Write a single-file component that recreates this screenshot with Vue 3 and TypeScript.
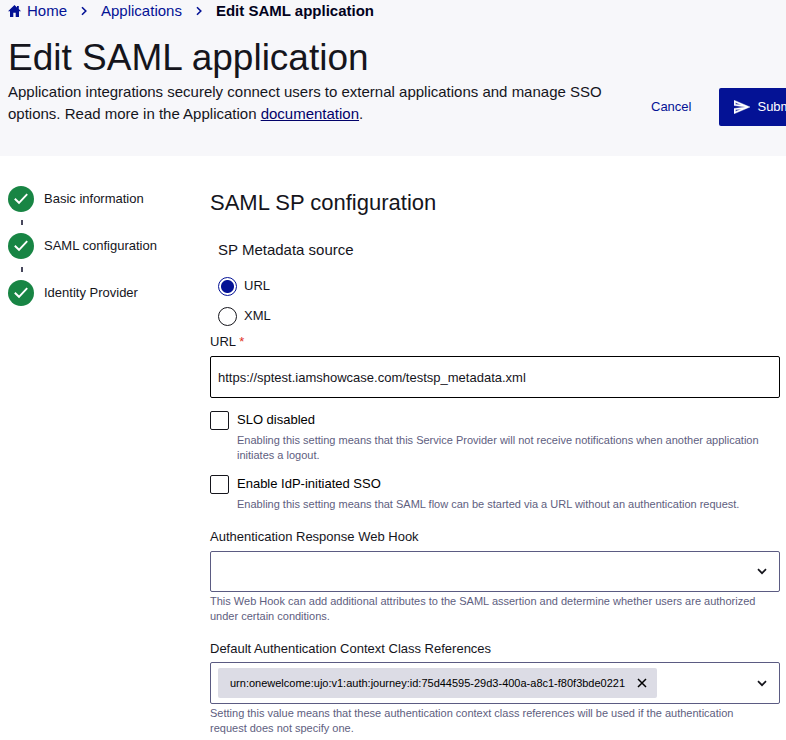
<script setup lang="ts">
import { ref } from 'vue'

interface Step {
  label: string
}

interface Option {
  key: string
  label: string
  hint: string
  enabled: boolean
}

const steps: Step[] = [
  { label: 'Basic information' },
  { label: 'SAML configuration' },
  { label: 'Identity Provider' },
]

const sources: string[] = ['URL', 'XML']
const source = ref('URL')
const metadataUrl = ref('https://sptest.iamshowcase.com/testsp_metadata.xml')
const webHook = ref('')

const options = ref<Option[]>([
  {
    key: 'slo',
    label: 'SLO disabled',
    hint: 'Enabling this setting means that this Service Provider will not receive notifications when another application initiates a logout.',
    enabled: false,
  },
  {
    key: 'idp',
    label: 'Enable IdP-initiated SSO',
    hint: 'Enabling this setting means that SAML flow can be started via a URL without an authentication request.',
    enabled: false,
  },
])

const references = ref<string[]>([
  'urn:onewelcome:ujo:v1:auth:journey:id:75d44595-29d3-400a-a8c1-f80f3bde0221',
])

function removeReference(value: string): void {
  references.value = references.value.filter((item) => item !== value)
}
</script>

<template>
  <div class="page">
    <header class="header">
      <nav class="crumbs" aria-label="Breadcrumb">
        <a href="#home" class="crumb home">
          <svg class="home-icon" viewBox="0 0 13 12" aria-hidden="true">
            <path d="M6.500 0 0 6.200h2V12h3.300V7.800h2.400V12H11V6.200h2L10.800 4.100V1H9v1.400Z" fill="currentColor" />
          </svg>
          Home
        </a>
        <svg class="crumb-sep" viewBox="0 0 6 10" aria-hidden="true">
          <path d="M1 1.200 4.800 5 1 8.800" fill="none" stroke="currentColor" stroke-width="1.600" />
        </svg>
        <a href="#applications" class="crumb">Applications</a>
        <svg class="crumb-sep" viewBox="0 0 6 10" aria-hidden="true">
          <path d="M1 1.200 4.800 5 1 8.800" fill="none" stroke="currentColor" stroke-width="1.600" />
        </svg>
        <span class="crumb current" aria-current="page">Edit SAML application</span>
      </nav>
      <h1>Edit SAML application</h1>
      <div class="intro-row">
        <p class="intro">
          Application integrations securely connect users to external applications and manage SSO
          options. Read more in the Application <a href="#documentation">documentation</a>.
        </p>
        <div class="actions">
          <button type="button" class="btn text">Cancel</button>
          <button type="submit" form="saml-form" class="btn primary">
            <svg class="send-icon" viewBox="2 3 21 18" aria-hidden="true">
              <path d="M4.010 6.030l7.510 3.220-7.520-1 .010-2.220m7.500 8.720L4 17.970v-2.220l7.510-1M2.010 3L2 10l15 2-15 2 .010 7L23 12 2.010 3z" fill="currentColor" stroke="currentColor" stroke-width="0.500" />
            </svg>
            Submit
          </button>
        </div>
      </div>
    </header>

    <div class="body">
      <ol class="steps">
        <li v-for="step in steps" :key="step.label" class="step">
          <svg class="step-icon" viewBox="0 0 26 26" aria-hidden="true">
            <circle cx="13" cy="13" r="13" fill="#188544" />
            <path d="M6.800 12.800 11 16.800 19.200 8.200" fill="none" stroke="#fff" stroke-width="1.900" />
          </svg>
          <span class="step-label">{{ step.label }}</span>
        </li>
      </ol>

      <form id="saml-form" class="form" @submit.prevent>
        <h2>SAML SP configuration</h2>

        <fieldset class="sources">
          <legend>SP Metadata source</legend>
          <label v-for="item in sources" :key="item" class="radio">
            <input v-model="source" type="radio" name="source" :value="item" />
            {{ item }}
          </label>
        </fieldset>

        <label class="label" for="metadata-url">URL <span class="required">*</span></label>
        <input id="metadata-url" v-model="metadataUrl" class="control url" type="text" />

        <div v-for="option in options" :key="option.key" class="option">
          <input :id="option.key" v-model="option.enabled" type="checkbox" />
          <label :for="option.key">{{ option.label }}</label>
          <p class="hint">{{ option.hint }}</p>
        </div>

        <label class="label hook" for="web-hook">Authentication Response Web Hook</label>
        <div class="control select">
          <select id="web-hook" v-model="webHook">
            <option value=""></option>
          </select>
          <svg class="caret" viewBox="0 0 10 7" aria-hidden="true">
            <path d="M1 1.200 5 5.200 9 1.200" fill="none" stroke="currentColor" stroke-width="1.700" />
          </svg>
        </div>
        <p class="hint">
          This Web Hook can add additional attributes to the SAML assertion and determine whether users are authorized
          under certain conditions.
        </p>

        <label class="label refs" for="refs-toggle">Default Authentication Context Class References</label>
        <div class="control multi">
          <span v-for="item in references" :key="item" class="chip">
            {{ item }}
            <button type="button" class="remove" :aria-label="`Remove ${item}`" @click="removeReference(item)">
              <svg viewBox="0 0 10 10" aria-hidden="true">
                <path d="M1 1 9 9M9 1 1 9" stroke="currentColor" stroke-width="1.500" />
              </svg>
            </button>
          </span>
          <button id="refs-toggle" type="button" class="toggle">
            <svg class="caret" viewBox="0 0 10 7" aria-hidden="true">
              <path d="M1 1.200 5 5.200 9 1.200" fill="none" stroke="currentColor" stroke-width="1.700" />
            </svg>
          </button>
        </div>
        <p class="hint">
          Setting this value means that these authentication context class references will be used if the authentication
          request does not specify one.
        </p>
      </form>
    </div>
  </div>
</template>

<style>
body {
  background: #fff;
}
</style>

<style scoped>
.page {
  overflow: hidden;
  color: #15151c;
  font-family: "Liberation Sans", Arial, sans-serif;
  font-size: 13px;
  line-height: 16px;
}

.page * {
  box-sizing: border-box;
}

button,
input,
select {
  margin: 0;
  font: inherit;
  color: inherit;
}

h1,
h2,
p {
  margin: 0;
  font-weight: 400;
}

.header {
  padding: 2px 8px 30px;
  background: #f7f7fa;
}

.crumbs {
  display: flex;
  align-items: center;
  gap: 14px;
  font-size: 15px;
  line-height: 18px;
}

.crumb {
  color: #041295;
  text-decoration: none;
}

.home {
  display: flex;
  align-items: center;
  gap: 6px;
}

.home-icon {
  width: 13px;
  height: 12px;
}

.crumb-sep {
  width: 6px;
  height: 10px;
  color: #041295;
}

.current {
  color: #02021c;
  font-weight: 700;
}

h1 {
  margin-top: 14px;
  font-size: 37px;
  line-height: 47px;
}

.intro-row {
  display: flex;
  align-items: flex-start;
  gap: 14px;
}

.intro {
  flex: 1 0 610px;
  font-size: 15px;
  line-height: 22px;
}

.intro a {
  color: #02026a;
}

.actions {
  display: flex;
  flex: none;
  gap: 9px;
  padding-top: 7px;
}

.btn {
  display: flex;
  align-items: center;
  gap: 7px;
  height: 38px;
  padding: 0 19px;
  border: 0;
  border-radius: 2px;
  background: none;
}

.btn.text {
  color: #041295;
}

.btn.primary {
  padding: 0 15px;
  background: #041295;
  color: #fff;
}

.send-icon {
  width: 16px;
  height: 14px;
}

.body {
  display: flex;
  align-items: flex-start;
  padding: 30px 6px 0 8px;
}

.steps {
  flex: 0 0 202px;
  margin: 0;
  padding: 0;
  list-style: none;
}

.step {
  display: flex;
  position: relative;
  gap: 10px;
  height: 47px;
}

.step:not(:last-child)::after {
  position: absolute;
  top: 34px;
  left: 13px;
  width: 2px;
  height: 5px;
  background: #47475c;
  content: "";
}

.step-icon {
  width: 26px;
  height: 26px;
}

.step-label {
  line-height: 25px;
}

.form {
  display: flex;
  flex: 1;
  flex-direction: column;
  min-width: 0;
}

h2 {
  margin-top: 3px;
  font-size: 22px;
  line-height: 28px;
}

.sources {
  display: flex;
  flex-direction: column;
  gap: 10px;
  margin: 24px 0 0;
  padding: 0 8px;
  border: 0;
}

legend {
  margin-bottom: 17px;
  padding: 0;
  font-size: 15px;
  line-height: 18px;
}

.radio {
  display: flex;
  align-items: center;
  gap: 7px;
  height: 20px;
}

.radio input {
  flex: none;
  width: 19px;
  height: 19px;
  border: 1px solid #15151c;
  border-radius: 50%;
  background: #fff;
  appearance: none;
}

.radio input:checked {
  border-color: #041295;
  background: radial-gradient(circle, #041295 6px, #fff 7px);
}

.label {
  margin-top: 8px;
}

.required {
  color: #e0301e;
}

.control {
  border: 1px solid #5b5b82;
  border-radius: 2px;
  background: #fff;
}

.url {
  width: 100%;
  height: 42px;
  margin: 6px 0 4px;
  padding: 0 7px;
  border-color: #000;
}

.option {
  display: grid;
  grid-template-columns: 20px 1fr;
  column-gap: 7px;
  align-items: center;
  margin-top: 8px;
}

.option input {
  width: 19px;
  height: 19px;
  border: 1px solid #15151c;
  border-radius: 2px;
  background: #fff;
  appearance: none;
}

.option label {
  color: #000;
  line-height: 20px;
}

.option .hint {
  grid-column: 2;
  padding: 3px 0;
}

.hint {
  padding: 2px 16px 0 0;
  color: #5e5e80;
  font-size: 11px;
  line-height: 15px;
}

.hook {
  margin-top: 14px;
}

.refs {
  margin-top: 17px;
}

.select {
  display: grid;
  align-items: center;
  height: 41px;
  margin-top: 6px;
}

.select > * {
  grid-area: 1 / 1;
}

.select select {
  width: 100%;
  height: 100%;
  padding: 0 8px;
  border: 0;
  background: none;
  appearance: none;
}

.caret {
  display: block;
  justify-self: end;
  width: 10px;
  height: 7px;
  pointer-events: none;
}

.select .caret {
  margin-right: 12px;
}

.multi {
  display: flex;
  align-items: center;
  justify-content: space-between;
  min-height: 42px;
  margin-top: 5px;
  padding: 5px 12px 5px 7px;
}

.chip {
  display: flex;
  align-items: center;
  gap: 12px;
  height: 30px;
  padding: 0 10px 0 12px;
  border-radius: 2px;
  background: #dcdce5;
  color: #000;
  font-size: 11px;
}

.remove,
.toggle {
  display: grid;
  place-items: center;
  padding: 0;
  border: 0;
  background: none;
}

.remove svg {
  display: block;
  width: 10px;
  height: 10px;
}

.toggle {
  height: 30px;
}
</style>
